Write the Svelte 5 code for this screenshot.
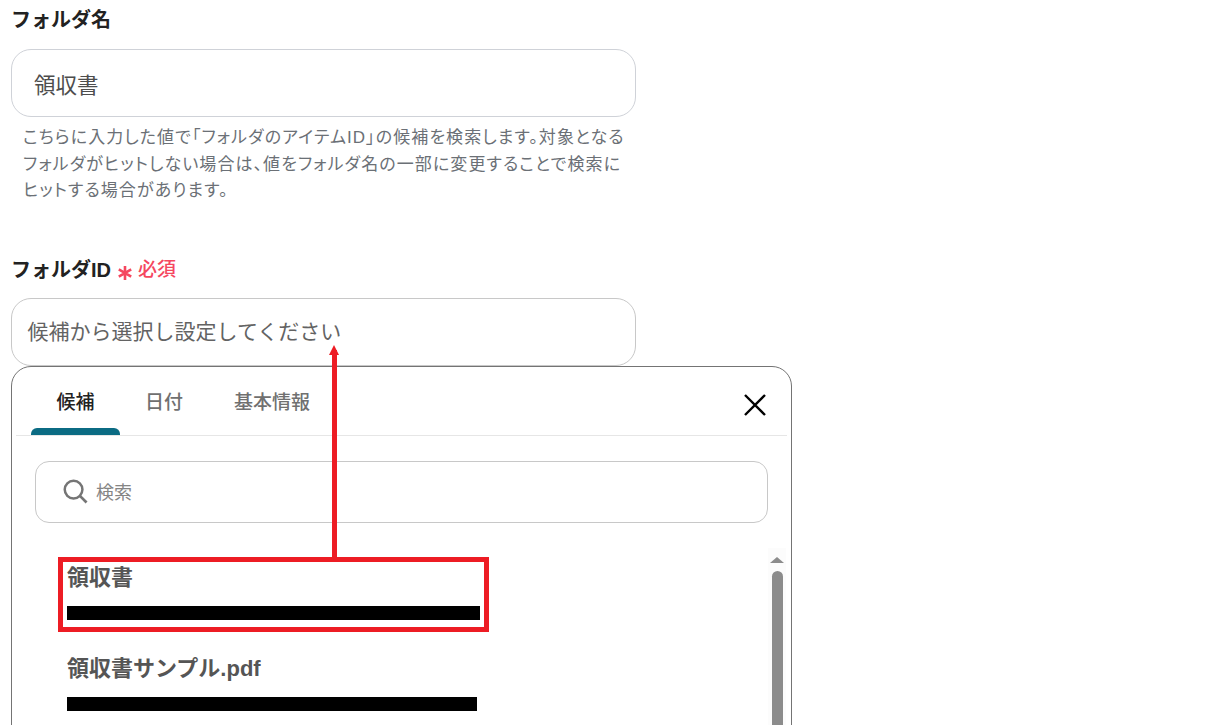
<script>
  const tabs = ['候補', '日付', '基本情報'];
  const results = [
    { name: '領収書', barWidth: 413 },
    { name: '領収書サンプル.pdf', barWidth: 410 }
  ];
</script>

<div class="page">
  <section class="field first">
    <div class="label">フォルダ名</div>
    <div class="input value">領収書</div>
    <p class="help">
      こちらに入力した値で「フォルダのアイテムID」の候補を検索します。対象となる<br />
      フォルダがヒットしない場合は、値をフォルダ名の一部に変更することで検索に<br />
      ヒットする場合があります。
    </p>
  </section>

  <section class="field second">
    <div class="label">
      フォルダID
      <span class="required">
        <svg class="star" viewBox="0 0 16 16" width="16" height="16" aria-hidden="true">
          <path d="M8 1 V15 M1.8 4.4 L14.2 11.6 M14.2 4.4 L1.8 11.6" fill="none" stroke="#f5475f" stroke-width="2.6" />
        </svg>
        必須
      </span>
    </div>
    <div class="input placeholder">候補から選択し設定してください</div>

    <div class="panel">
      <div class="tabs">
        {#each tabs as tab, i}
          <div class="tab" class:active={i === 0}>{tab}</div>
        {/each}
        <svg class="close" viewBox="0 0 24 24" width="24" height="24" aria-hidden="true">
          <path d="M2 2 L22 22 M22 2 L2 22" fill="none" stroke="#000" stroke-width="2.4" />
        </svg>
      </div>

      <div class="search">
        <svg viewBox="0 0 26 26" width="25" height="25" aria-hidden="true">
          <circle cx="11" cy="11" r="9.2" fill="none" stroke="#757575" stroke-width="2.6" />
          <path d="M17.6 17.6 L24.5 24.5" fill="none" stroke="#757575" stroke-width="2.8" />
        </svg>
        <span>検索</span>
      </div>

      <div class="list">
        <div class="items">
          {#each results as item}
            <div class="item">
              <div class="name">{item.name}</div>
              <div class="redacted" style="width: {item.barWidth}px"></div>
            </div>
          {/each}
        </div>
        <div class="scrollbar">
          <div class="arrow"></div>
          <div class="thumb"></div>
        </div>
      </div>
    </div>

    <div class="highlight"></div>
    <div class="arrow-line"></div>
    <div class="arrow-head"></div>
  </section>
</div>

<style>
  :global(body) {
    margin: 0;
    background: #fff;
    overflow: hidden;
  }

  .page {
    width: 1232px;
    height: 725px;
    overflow: hidden;
    font-family: "Liberation Sans", "Noto Sans CJK JP", sans-serif;
    color: #222;
  }

  .field {
    position: relative;
    width: 625px;
    margin-left: 11px;
  }

  .first {
    padding-top: 6px;
  }

  .second {
    margin-top: 51px;
  }

  .label {
    font-size: 20px;
    font-weight: 700;
    line-height: 28px;
    color: #222;
    display: flex;
    align-items: center;
    gap: 6px;
  }

  .required {
    display: inline-flex;
    align-items: center;
    gap: 5px;
    font-size: 19px;
    font-weight: 500;
    color: #f5475f;
  }

  .star {
    margin-top: 6px;
  }

  .input {
    box-sizing: border-box;
    width: 625px;
    height: 68px;
    border: 1px solid #cfd2d8;
    border-radius: 20px;
    display: flex;
    align-items: center;
    margin-top: 15px;
    background: #fff;
  }

  .value {
    padding-left: 22px;
    font-size: 21.5px;
    color: #4d4d4d;
  }

  .placeholder {
    margin-top: 14.5px;
    padding-left: 15.6px;
    padding-bottom: 5px;
    font-size: 21px;
    color: #636363;
    border-color: #c8c8c8;
  }

  .help {
    margin: 8px 0 0 12px;
    width: 620px;
    font-size: 17px;
    font-feature-settings: "palt";
    letter-spacing: 1.08px;
    line-height: 26.5px;
    color: #6b7076;
    white-space: nowrap;
  }

  .panel {
    box-sizing: border-box;
    width: 781px;
    height: 500px;
    border: 1px solid #747474;
    border-radius: 20px;
    padding: 0 4px;
    background: #fff;
  }

  .tabs {
    position: relative;
    display: flex;
    height: 68px;
    padding-left: 15px;
    border-bottom: 1px solid #e6e6e6;
  }

  .tab {
    padding: 22px 25.5px 0;
    font-size: 19px;
    font-weight: 500;
    line-height: 28px;
    color: #707070;
  }

  .tab:nth-child(2) {
    padding: 22px 25.5px 0 25px;
  }

  .active {
    position: relative;
    color: #222;
  }

  .active::after {
    content: '';
    position: absolute;
    left: 0;
    right: 0;
    bottom: 0;
    height: 7px;
    background: #0b6b83;
    border-radius: 6px 6px 0 0;
  }

  .close {
    position: absolute;
    right: 20px;
    top: 26px;
  }

  .search {
    box-sizing: border-box;
    display: flex;
    align-items: center;
    gap: 8px;
    width: 733px;
    height: 62px;
    margin: 25px 0 0 19px;
    padding-left: 27px;
    padding-bottom: 2px;
    border: 1px solid #c8c8c8;
    border-radius: 14px;
    font-size: 18px;
    color: #858585;
  }

  .list {
    display: flex;
    justify-content: space-between;
    margin-top: 25px;
  }

  .items {
    padding: 14px 0 0 51px;
  }

  .item {
    height: 91px;
  }

  .name {
    font-size: 22px;
    font-weight: 700;
    line-height: 32px;
    color: #555;
  }

  .redacted {
    height: 14px;
    margin-top: 12px;
    background: #000;
  }

  .scrollbar {
    width: 18px;
    margin-right: 1px;
    padding-top: 9px;
    background: #fcfcfc;
  }

  .arrow {
    width: 0;
    height: 0;
    margin: 0 auto;
    border-left: 7px solid transparent;
    border-right: 7px solid transparent;
    border-bottom: 6px solid #8c8c8c;
  }

  .thumb {
    width: 11px;
    height: 400px;
    margin: 8px auto 0;
    background: #8c8c8c;
    border-radius: 6px;
  }

  /* red callout drawn over the form */
  .highlight {
    position: absolute;
    left: 47px;
    top: 301.5px;
    width: 431px;
    height: 75px;
    box-sizing: border-box;
    border: 5px solid #ed1c24;
  }

  .arrow-line {
    position: absolute;
    left: 321px;
    top: 94.5px;
    width: 5px;
    height: 207px;
    background: #ed1c24;
  }

  .arrow-head {
    position: absolute;
    left: 318px;
    top: 89.5px;
    width: 0;
    height: 0;
    border-left: 5.5px solid transparent;
    border-right: 5.5px solid transparent;
    border-bottom: 10px solid #ed1c24;
  }
</style>
